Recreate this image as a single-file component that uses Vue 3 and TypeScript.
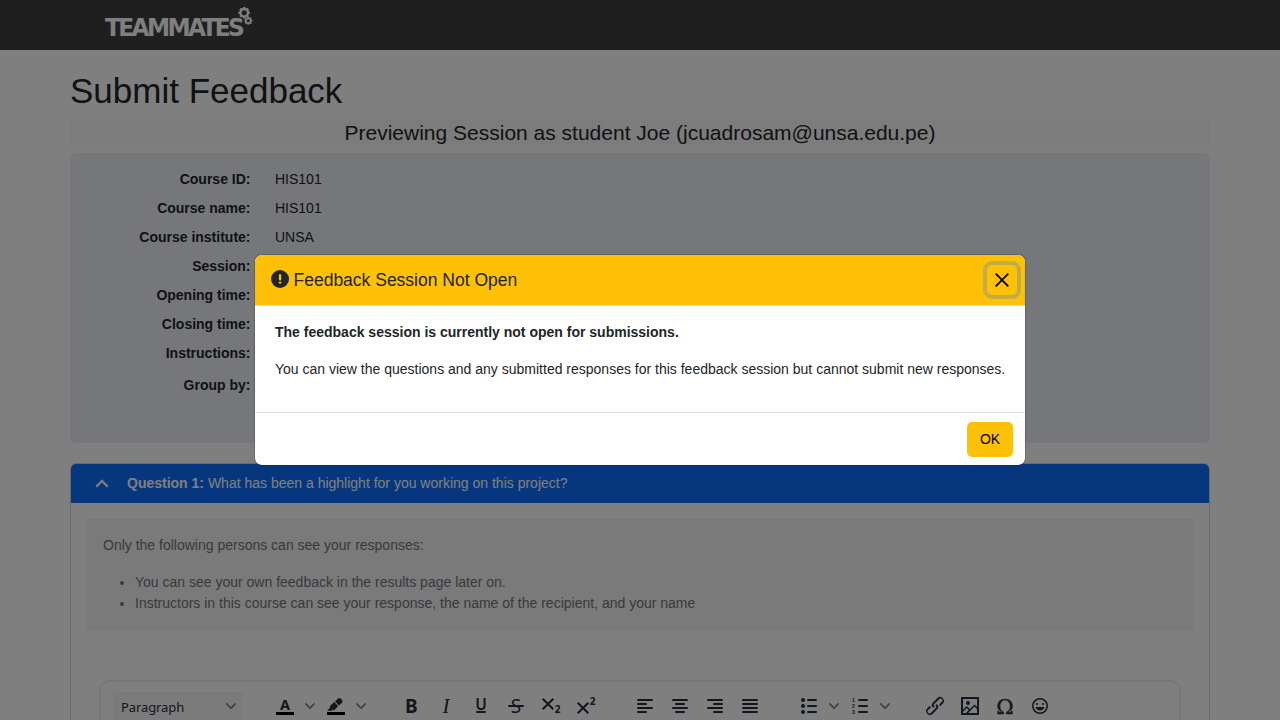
<script setup lang="ts">
const rows: { label: string; value: string }[] = [
  { label: 'Course ID:', value: 'HIS101' },
  { label: 'Course name:', value: 'HIS101' },
  { label: 'Course institute:', value: 'UNSA' },
  { label: 'Session:', value: '' },
  { label: 'Opening time:', value: '' },
  { label: 'Closing time:', value: '' },
  { label: 'Instructions:', value: '' },
  { label: 'Group by:', value: '' },
]
const aligns: number[][] = [
  [4, 4, 4, 4, 16, 10, 16, 10],
  [4, 7, 4, 7, 16, 10, 16, 10],
  [4, 10, 4, 10, 16, 10, 16, 10],
  [4, 4, 4, 4, 16, 16, 16, 16],
]
const lines = [0, 1, 2, 3]
const teeth = [0, 45, 90, 135, 180, 225, 270, 315]
const chevron =
  'M8.7 2.2c.3-.3.8-.3 1 0 .4.4.4.9 0 1.2L5.7 7.8c-.3.3-.9.3-1.2 0L.2 3.4a.8.8 0 0 1 0-1.2c.3-.3.8-.3 1.1 0L5 6l3.7-3.8z'
</script>

<template>
  <div class="page">
    <nav class="navbar">
      <svg class="logo" width="150" height="40" viewBox="0 0 150 40">
        <g transform="translate(1 32) scale(.93 1)">
          <text class="brand" textLength="150.300" lengthAdjust="spacing">TEAMMATES</text>
        </g>
        <g class="gear" transform="translate(140.200 8.700)">
          <circle r="3.700" />
          <path v-for="a in teeth" :key="a" d="M0-4V-5.800" :transform="`rotate(${a})`" />
        </g>
        <g class="gear small" transform="translate(144.300 16.700)">
          <circle r="2.400" />
          <path v-for="a in teeth" :key="a" d="M0-2.500V-4" :transform="`rotate(${a})`" />
        </g>
      </svg>
    </nav>

    <main class="container">
      <h1>Submit Feedback</h1>
      <div class="preview">Previewing Session as student Joe (jcuadrosam@unsa.edu.pe)</div>

      <section class="info">
        <div v-for="row in rows" :key="row.label" class="info-row">
          <b>{{ row.label }}</b><span>{{ row.value }}</span>
        </div>
      </section>

      <section class="card">
        <header class="card-header">
          <svg width="14" height="10" viewBox="0 0 14 10"><path d="M1.200 7.700 7 1.900 12.800 7.700" /></svg>
          <span><b>Question 1:</b> What has been a highlight for you working on this project?</span>
        </header>
        <div class="visibility">
          <p>Only the following persons can see your responses:</p>
          <ul>
            <li>You can see your own feedback in the results page later on.</li>
            <li>Instructors in this course can see your response, the name of the recipient, and your name</li>
          </ul>
        </div>
        <div class="editor">
          <div class="select"><span>Paragraph</span><svg class="chev" width="10" height="10"><path :d="chevron" /></svg></div>
          <div class="group colors">
            <div class="split">
              <svg width="24" height="24"><rect class="bar" x="3" y="18" width="18" height="3" /><text class="sans b" x="12" y="16" font-size="14.500">A</text></svg>
              <svg class="chev" width="10" height="10"><path :d="chevron" /></svg>
            </div>
            <div class="split">
              <svg width="24" height="24"><rect class="bar" x="3" y="18" width="18" height="3" /><path d="M7.700 16.700H3l3.300-3.300-.7-.8L10.200 8l4 4.100-4 4.200c-.2.2-.6.2-.8 0l-.6-.7-1.100 1.100zm5-7.500L11 7.400l3-2.900a2 2 0 0 1 2.600 0L18 6c.7.7.7 2 0 2.700l-2.900 2.900-1.800-1.800-.5-.6" /></svg>
              <svg class="chev" width="10" height="10"><path :d="chevron" /></svg>
            </div>
          </div>
          <div class="group format">
            <svg width="24" height="24"><text class="sans b" x="12.300" y="19" font-size="19">B</text></svg>
            <svg width="24" height="24"><text class="serif" x="12" y="19" font-size="21" font-style="italic">I</text></svg>
            <svg width="24" height="24"><text class="sans sb" x="12" y="15.800" font-size="15.500">U</text><rect x="7" y="17" width="10" height="2" rx="1" /></svg>
            <svg width="24" height="24"><text class="sans" x="12" y="19" font-size="19">S</text><rect x="4" y="11" width="16" height="2" rx="1" /></svg>
            <svg width="24" height="24"><path class="cross" d="m3.700 4.700 10.600 10.600m0-10.600L3.700 15.300" /><text class="sans b" x="18.500" y="19" font-size="10">2</text></svg>
            <svg width="24" height="24"><path class="cross" d="m3.700 8.700 10.600 10.600m0-10.600L3.700 19.300" /><text class="sans b" x="18.500" y="11" font-size="10">2</text></svg>
          </div>
          <div class="group align">
            <svg v-for="(a, k) in aligns" :key="k" width="24" height="24">
              <rect v-for="i in lines" :key="i" :x="a[i]" :y="5 + i * 4" :width="a[i + 4]" height="2" rx="1" />
            </svg>
          </div>
          <div class="group lists">
            <div class="split">
              <svg width="24" height="24">
                <g v-for="i in [0, 1, 2]" :key="i"><circle cx="6" :cy="6 + i * 6" r="2" /><rect x="10" :y="5 + i * 6" width="10" height="2" rx="1" /></g>
              </svg>
              <svg class="chev" width="10" height="10"><path :d="chevron" /></svg>
            </div>
            <div class="split">
              <svg width="24" height="24">
                <g v-for="i in [0, 1, 2]" :key="i"><text class="num" x="5.500" :y="7.900 + i * 6" font-size="5.100">{{ i + 1 }}</text><rect x="10" :y="5 + i * 6" width="10" height="2" rx="1" /></g>
              </svg>
              <svg class="chev" width="10" height="10"><path :d="chevron" /></svg>
            </div>
          </div>
          <div class="group insert">
            <svg width="24" height="24"><path d="M6.200 12.300a1 1 0 0 1 1.400 1.400l-2 2a2 2 0 1 0 2.600 2.800l4.800-4.800a1 1 0 0 0 0-1.400 1 1 0 1 1 1.400-1.300 2.900 2.900 0 0 1 0 4L9.600 20a3.900 3.900 0 0 1-5.500-5.500l2-2zm11.600-.6a1 1 0 0 1-1.400-1.400l2-2a2 2 0 1 0-2.600-2.800L11 10.300a1 1 0 0 0 0 1.400A1 1 0 1 1 9.600 13a2.900 2.900 0 0 1 0-4L14.400 4a3.900 3.900 0 0 1 5.500 5.500l-2 2z" /></svg>
            <svg width="24" height="24"><path fill-rule="evenodd" d="m5 15.700 3.300-3.200c.3-.3.700-.3 1 0L12 15l4.100-4c.3-.4.8-.4 1 0l2 1.900V5H5v10.700zM5 18v1h3l2.800-2.900-2-2L5 17.900zm14-3-2.500-2.400-6.400 6.500H19v-4zM3 3h18v18H3zm7 8a2 2 0 1 0 0-4 2 2 0 0 0 0 4z" /></svg>
            <svg width="24" height="24"><text class="omega" x="12" y="20" font-size="21">Ω</text></svg>
            <svg width="24" height="24"><path fill-rule="evenodd" d="M9 11a1 1 0 1 0 0-2 1 1 0 0 0 0 2zm6 0a1 1 0 1 0 0-2 1 1 0 0 0 0 2zm-3 5.500c2.100 0 4-1.500 4.400-3.500H7.600c.5 2 2.300 3.500 4.400 3.500zM12 4a8 8 0 1 0 0 16 8 8 0 0 0 0-16zm0 14.500a6.500 6.500 0 1 1 0-13 6.500 6.500 0 0 1 0 13z" /></svg>
          </div>
        </div>
      </section>
    </main>

    <div class="backdrop">
      <div class="modal" role="dialog">
        <header class="modal-header">
          <svg width="18" height="18" viewBox="0 0 18 18"><circle cx="9" cy="9" r="9" /><rect x="7.900" y="4.200" width="2.300" height="6.200" rx=".8" /><circle class="dot" cx="9.050" cy="12.600" r="1.200" /></svg>
          <h5>Feedback Session Not Open</h5>
          <button class="close" aria-label="Close"><svg width="14" height="14" viewBox="0 0 14 14"><path d="m.7.7 12.600 12.600M13.300.7.7 13.300" /></svg></button>
        </header>
        <div class="modal-body">
          <p><b>The feedback session is currently not open for submissions.</b></p>
          <p>You can view the questions and any submitted responses for this feedback session but cannot submit new responses.</p>
        </div>
        <footer class="modal-footer"><button class="ok">OK</button></footer>
      </div>
    </div>
  </div>
</template>

<style>
body { margin: 0; overflow: hidden; }
</style>

<style scoped>
.page {
  position: relative;
  height: 720px;
  overflow: hidden;
  background: #fff;
  color: #212529;
  font: 14px/21px "Liberation Sans", Arial, sans-serif;
}
* { box-sizing: border-box; }
svg { display: block; flex: none; }
.navbar { height: 50px; padding: 4px 0 0 104px; background: #3e3e3e; }
.logo { fill: #fff; }
.gear { fill: none; stroke: #fff; stroke-width: 2.3; }
.gear.small { stroke-width: 1.7; }
.container { width: 1140px; margin: 0 auto; padding-top: 20px; }
h1 { margin: 0 0 8px; font-size: 35px; line-height: 42px; font-weight: 400; }
.preview {
  height: 25px;
  margin-bottom: 8px;
  background: #f8f8f8;
  font-size: 21px;
  line-height: 25px;
  text-align: center;
}
.info { height: 290px; padding-top: 12px; border-radius: 5px; background: #edeff6; }
.info-row { display: flex; gap: 24.5px; height: 29px; line-height: 29px; }
.info-row b { width: 180.5px; text-align: right; }
.info-row:last-child { padding-top: 3px; }
.card {
  height: 400px;
  margin-top: 20px;
  border: 1px solid rgba(0, 0, 0, 0.176);
  border-radius: 6px;
  overflow: hidden;
}
.card-header {
  display: flex;
  align-items: center;
  gap: 18px;
  height: 39px;
  padding-left: 24px;
  background: #0d6efd;
  color: #fff;
}
.card-header svg { fill: none; stroke: #fff; stroke-width: 2.2; }
.visibility {
  height: 111px;
  margin: 16px 16px 0;
  padding: 16px;
  background: #f5f5f5;
  color: #6c757d;
}
.visibility p { margin: 0 0 16px; }
.visibility ul { margin: 0; padding-left: 32px; }
.editor {
  display: flex;
  align-items: flex-start;
  height: 240px;
  margin: 50px 28px 0;
  padding: 10px 0 0 12px;
  border: 2px solid #eee;
  border-radius: 10px;
  fill: #222f3e;
}
.select {
  display: flex;
  align-items: center;
  justify-content: space-between;
  width: 130px;
  height: 28px;
  padding: 0 7px 0 8px;
  border-radius: 3px;
  background: #f7f7f7;
  color: #222f3e;
  font: 13px "Noto Sans", sans-serif;
}
.select span { padding-top: 2px; letter-spacing: -0.1px; }
.chev { fill: rgba(34, 47, 62, 0.6); }
.group { display: flex; padding-top: 2px; }
.split { display: flex; align-items: center; gap: 8px; }
.colors { margin-left: 30px; gap: 9px; }
.format { gap: 11px; margin-left: 33px; }
.align { gap: 11px; margin-left: 35px; }
.lists { gap: 9px; margin-left: 35px; }
.insert { gap: 11px; margin-left: 33px; }
.bar { fill: #000; }
text { text-anchor: middle; }
.brand { font: bold 25px "DejaVu Sans", sans-serif; text-anchor: start; }
.sans { font-family: "Noto Sans", sans-serif; }
.b { font-weight: 700; }
.sb { font-weight: 600; }
.num { font-family: "Liberation Sans", sans-serif; font-weight: 700; }
.serif { font-family: "Liberation Serif", serif; }
.omega { font-family: "DejaVu Serif", serif; stroke: #222f3e; stroke-width: 0.4; }
.cross { fill: none; stroke: #222f3e; stroke-width: 2; }
.backdrop {
  position: absolute;
  inset: 0;
  display: flex;
  justify-content: center;
  align-items: center;
  background: rgba(0, 0, 0, 0.5);
}
.modal {
  width: 772px;
  height: 212px;
  border: 1px solid rgba(0, 0, 0, 0.176);
  border-radius: 8px;
  background: #fff;
  background-clip: padding-box;
  overflow: hidden;
}
.modal-header {
  display: flex;
  align-items: center;
  height: 51px;
  padding: 0 8px 0 16px;
  border-bottom: 1px solid #dee2e6;
  background: #ffc107;
}
.modal-header > svg { margin-top: -2px; }
.modal-header svg { fill: #212529; }
.modal-header rect, .modal-header .dot { fill: #ffc107; }
h5 { margin: 0 auto 0 4.5px; font-size: 17.5px; line-height: 26px; font-weight: 400; }
.close {
  display: flex;
  align-items: center;
  justify-content: center;
  width: 30px;
  height: 30px;
  padding: 0;
  border: 0;
  border-radius: 5px;
  background: transparent;
  box-shadow: 0 0 0 4px rgba(134, 155, 122, 0.5);
}
.close svg { fill: none; stroke: #000; stroke-width: 1.8; }
.modal-body { height: 106px; padding: 16px 20px; }
.modal-body p { margin: 0 0 16px; white-space: nowrap; }
.modal-footer {
  display: flex;
  align-items: center;
  justify-content: flex-end;
  height: 53px;
  padding: 1px 12px 0;
  border-top: 1px solid #dee2e6;
}
.ok {
  width: 46px;
  height: 35px;
  padding: 0;
  border: 0;
  border-radius: 5px;
  background: #ffc107;
  color: #000;
  font: 14px/21px "Liberation Sans", Arial, sans-serif;
}
</style>
